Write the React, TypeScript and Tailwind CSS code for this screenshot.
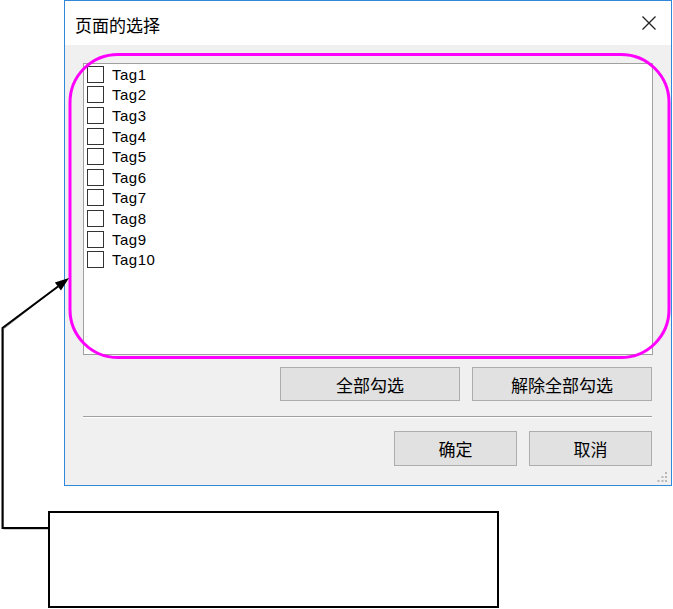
import React from 'react';

const tags = ['Tag1', 'Tag2', 'Tag3', 'Tag4', 'Tag5', 'Tag6', 'Tag7', 'Tag8', 'Tag9', 'Tag10'];

const cjk = { fontFamily: '"Noto Sans CJK SC", "Noto Sans", sans-serif' };

function Button({ label, className }: { label: string; className: string }) {
  return (
    <button
      className={`flex items-center justify-center bg-[#e1e1e1] border border-[#adadad] text-[17px] text-black leading-none ${className}`}
      style={cjk}
    >
      {label}
    </button>
  );
}

export default function App() {
  return (
    <div className="relative w-[673px] h-[609px] bg-white overflow-hidden">
      {/* dialog window */}
      <div className="relative ml-[64px] w-[608px] h-[486px] border border-[#3088d8] flex flex-col bg-[#f0f0f0]">
        <div className="h-[44px] bg-white flex items-center justify-between pl-[10px] pr-[14px] shrink-0">
          <span className="text-[17px] text-black leading-none pt-[2px]" style={cjk}>
            页面的选择
          </span>
          <svg width="16" height="16" viewBox="0 0 16 16" className="mt-[-1px]">
            <path d="M1.5 1.5 L14.5 14.5 M14.5 1.5 L1.5 14.5" stroke="#222" strokeWidth="1.3" />
          </svg>
        </div>

        <div className="flex flex-col px-[18px] pt-[18px]">
          <div className="w-[570px] h-[292px] bg-white border border-[#a0a0a0] pl-[3px]">
            {tags.map((t) => (
              <div key={t} className="h-[20.6px] flex items-center gap-[8px]">
                <div className="w-[17px] h-[17px] border-[1.5px] border-[#333] bg-white" />
                <span
                  className="text-[15px] text-black leading-none tracking-[0.5px]"
                  style={{ fontFamily: '"Liberation Sans", Arial, sans-serif' }}
                >
                  {t}
                </span>
              </div>
            ))}
          </div>

          <div className="flex justify-end gap-[12px] mt-[12px] pr-[1px]">
            <Button label="全部勾选" className="w-[180px] h-[34px]" />
            <Button label="解除全部勾选" className="w-[180px] h-[34px]" />
          </div>

          <div className="mt-[15px] h-[2px] w-[569px] border-t border-[#a0a0a0] bg-white" />

          <div className="flex justify-end gap-[12px] mt-[13px] pr-[1px]">
            <Button label="确定" className="w-[123px] h-[35px]" />
            <Button label="取消" className="w-[123px] h-[35px]" />
          </div>
        </div>

        {/* resize grip */}
        <svg width="12" height="12" viewBox="0 0 12 12" className="absolute right-[3px] bottom-[2px]">
          <rect x="9" y="1" width="2" height="2" fill="#b8b8b8" />
          <rect x="5.5" y="5" width="2" height="2" fill="#b8b8b8" />
          <rect x="9" y="5" width="2" height="2" fill="#b8b8b8" />
          <rect x="1.5" y="9" width="2" height="2" fill="#b8b8b8" />
          <rect x="5.5" y="9" width="2" height="2" fill="#b8b8b8" />
          <rect x="9" y="9" width="2" height="2" fill="#b8b8b8" />
        </svg>
      </div>

      {/* callout box */}
      <div className="ml-[48px] mt-[25px] w-[451px] h-[97px] border-2 border-black bg-white" />

      {/* annotation overlay */}
      <svg width="673" height="609" viewBox="0 0 673 609" className="absolute left-0 top-0 pointer-events-none">
        <rect x="70" y="54.5" width="599" height="303" rx="48" ry="48" fill="none" stroke="#ff00ff" strokeWidth="3" />
        <polyline points="48,529 3.5,529 3.5,329 58,286.5" fill="none" stroke="#9a9a9a" strokeWidth="1" />
        <polyline points="48,528 2.5,528 2.5,328 58,286.5" fill="none" stroke="#000" strokeWidth="2" />
        <polygon points="69,278 60.95,290.5 54.85,282.5" fill="#000" />
      </svg>
    </div>
  );
}
